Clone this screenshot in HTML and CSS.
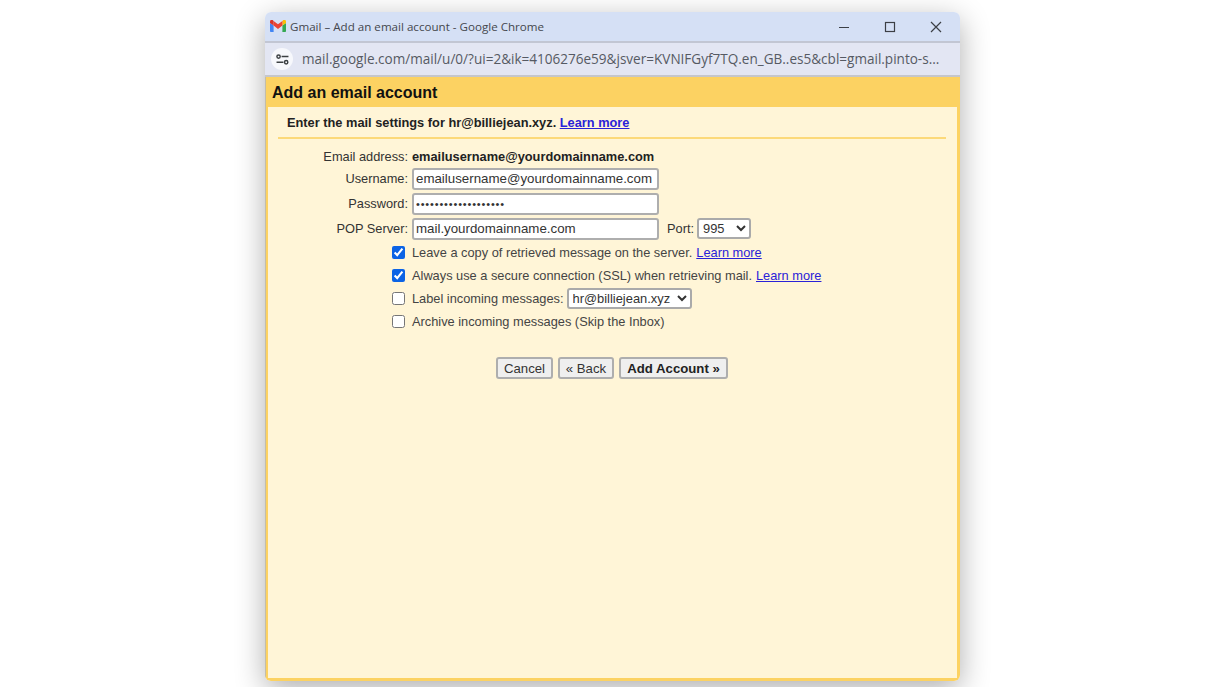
FILE: index.html
```html
<!DOCTYPE html>
<html lang="en">
<head>
<meta charset="utf-8">
<title>Gmail – Add an email account</title>
<link rel="stylesheet" href="styles.css">
</head>
<body>
<div class="window">
  <div class="titlebar">
    <svg class="gmail" viewBox="0 0 16 12" width="16" height="12">
      <path d="M1.1 12H3.6V5.6L0 2.9V10.900C0 11.500.5 12 1.100 12Z" fill="#4285f4"/>
      <path d="M12.400 12H14.900C15.500 12 16 11.500 16 10.900V2.900L12.400 5.600Z" fill="#34a853"/>
      <path d="M12.400 1V5.600L16 2.900V1.500C16 .1 14.400-.7 13.300.1Z" fill="#fbbc04"/>
      <path d="M3.600 5.600V1L8 4.300 12.400 1V5.600L8 8.900Z" fill="#ea4335"/>
      <path d="M0 1.500V2.900L3.600 5.600V1L2.700.1C1.600-.7 0 .1 0 1.500Z" fill="#d9352b"/>
    </svg>
    <span class="title-text">Gmail – Add an email account - Google Chrome</span>
    <div class="controls">
      <svg viewBox="0 0 12 12" width="12" height="12"><path d="M1 6.500H11" stroke="#3c3f45" stroke-width="1.200" fill="none"/></svg>
      <svg viewBox="0 0 12 12" width="12" height="12"><rect x="1.500" y="1.500" width="9" height="9" stroke="#3c3f45" stroke-width="1.200" fill="none"/></svg>
      <svg viewBox="0 0 12 12" width="12" height="12"><path d="M1 1L11 11M11 1L1 11" stroke="#3c3f45" stroke-width="1.200" fill="none"/></svg>
    </div>
  </div>
  <div class="urlbar">
    <span class="tune">
      <svg viewBox="0 0 14 12" width="13" height="11">
        <circle cx="2.700" cy="2.800" r="1.800" fill="none" stroke="#3c4043" stroke-width="1.600"/>
        <path d="M6 2.800H13.500M.5 9H8" stroke="#3c4043" stroke-width="1.600" fill="none"/>
        <circle cx="11" cy="9" r="1.800" fill="none" stroke="#3c4043" stroke-width="1.600"/>
      </svg>
    </span>
    <span class="url">mail.google.com/mail/u/0/?ui=2&amp;ik=4106276e59&amp;jsver=KVNIFGyf7TQ.en_GB..es5&amp;cbl=gmail.pinto-s...</span>
  </div>
  <div class="dialog">
    <h1 class="dialog-title">Add an email account</h1>
    <div class="panel">
      <p class="intro">Enter the mail settings for hr@billiejean.xyz. <a href="#">Learn more</a></p>
      <form class="form">
        <div class="row row-email">
          <span class="label">Email address:</span>
          <strong>emailusername@yourdomainname.com</strong>
        </div>
        <div class="row row-field">
          <label class="label" for="user">Username:</label>
          <input class="text-input" id="user" type="text" value="emailusername@yourdomainname.com">
        </div>
        <div class="row row-field">
          <label class="label" for="pass">Password:</label>
          <input class="text-input" id="pass" type="password" value="abcdefghijklmnopqrs">
        </div>
        <div class="row row-field">
          <label class="label" for="pop">POP Server:</label>
          <input class="text-input" id="pop" type="text" value="mail.yourdomainname.com">
          <label class="port-label" for="port">Port:</label>
          <select class="select select-port" id="port"><option>995</option></select>
        </div>
        <div class="checks">
          <div class="check-row">
            <input class="check" type="checkbox" checked>
            <span>Leave a copy of retrieved message on the server.</span>
            <a href="#">Learn more</a>
          </div>
          <div class="check-row">
            <input class="check" type="checkbox" checked>
            <span>Always use a secure connection (SSL) when retrieving mail.</span>
            <a href="#">Learn more</a>
          </div>
          <div class="check-row">
            <input class="check" type="checkbox">
            <span>Label incoming messages:</span>
            <select class="select select-label"><option>hr@billiejean.xyz</option></select>
          </div>
          <div class="check-row">
            <input class="check" type="checkbox">
            <span>Archive incoming messages (Skip the Inbox)</span>
          </div>
        </div>
        <div class="buttons">
          <button class="btn btn-cancel" type="button">Cancel</button>
          <button class="btn btn-back" type="button">« Back</button>
          <button class="btn btn-add" type="button">Add Account »</button>
        </div>
      </form>
    </div>
  </div>
</div>
</body>
</html>
```
FILE: styles.css
```css
* { box-sizing: border-box; }
html, body { margin: 0; height: 687px; overflow: hidden; background: #fff; }
body { display: flex; justify-content: center; padding: 12px 0 6px 0; font-family: "Liberation Sans", Arial, sans-serif; color: #222; }
.window { width: 695px; height: 669px; margin-left: 3px; display: flex; flex-direction: column; border-radius: 6px; overflow: hidden; box-shadow: 0 8px 30px rgba(0,0,0,.32); }
.titlebar { height: 31px; flex: none; display: flex; align-items: center; background: #d5e0f5; border-bottom: 2px solid #c2c6d3; padding-left: 5px; }
.gmail { flex: none; margin-top: -1px; }
.title-text { margin-left: 4px; font: 11.600px "Open Sans", sans-serif; color: #44474d; }
.controls { margin-left: auto; display: flex; gap: 34px; padding-right: 18px; }
.urlbar { height: 34px; flex: none; display: flex; align-items: center; background: #e3e6f3; border-bottom: 2px solid #c5c6cb; padding-left: 6px; }
.tune { width: 22px; height: 22px; border-radius: 50%; background: #f7f8fc; display: flex; align-items: center; justify-content: center; flex: none; }
.url { margin-left: 9px; font: 13.560px "Open Sans", sans-serif; color: #565a63; white-space: nowrap; }
.dialog { flex: 1; min-height: 0; display: flex; flex-direction: column; background: #fcd262; padding: 0 3px 3px 2px; border-left: 1px solid #c4bda6; }
.dialog-title { margin: 0; height: 30px; line-height: 31px; padding-left: 4px; font-size: 16px; font-weight: 700; color: #111; }
.panel { flex: 1; background: #fff5d7; padding: 0 11px 0 10px; }
.intro { margin: 0; height: 32px; line-height: 31px; padding-left: 9px; border-bottom: 2px solid #fcd979; font-size: 12.800px; font-weight: 700; color: #222; }
a { color: #2a22d8; text-decoration: underline; font-weight: 400; font-size: 12.800px; }
.intro a { font-weight: 700; }
.form { font-size: 12.800px; padding-top: 8px; }
.row { display: flex; align-items: center; }
.label { width: 130px; flex: none; text-align: right; margin-right: 4px; color: #333; }
.row-email { height: 19px; }
.row-email strong { color: #222; }
.row-field { height: 25px; }
.text-input { width: 247px; height: 22px; padding: 0 2px; border: 2px solid #aeaeae; border-radius: 3px; background: #fff; font: 13.300px "Liberation Sans", sans-serif; color: #333; }
#pass { font-size: 11px; letter-spacing: .83px; }
.port-label { margin: 0 3px 0 8px; color: #333; }
.select { height: 21px; border: 2px solid #aaa; border-radius: 3px; background: #fff; font: 12.900px "Liberation Sans", sans-serif; color: #333; padding: 0; }
.select-port { width: 54px; }
.select-label { width: 125px; margin-left: -1px; }
.checks { padding: 0 0 0 114px; }
.check-row { height: 23px; display: flex; align-items: center; gap: 4px; color: #444; }
.check { width: 13px; height: 13px; margin: 0 3px 0 0; flex: none; accent-color: #0b63e5; }
.buttons { display: flex; justify-content: flex-start; gap: 5px; padding: 24px 0 0 218px; }
.btn { height: 22px; padding: 0; border: 2px solid #aeaeae; border-radius: 3px; background: #efefef; font: 13.200px "Liberation Sans", sans-serif; color: #333; }
.btn-cancel { width: 57px; }
.btn-back { width: 56px; }
.btn-add { width: 109px; font-weight: 700; color: #222; }
```
